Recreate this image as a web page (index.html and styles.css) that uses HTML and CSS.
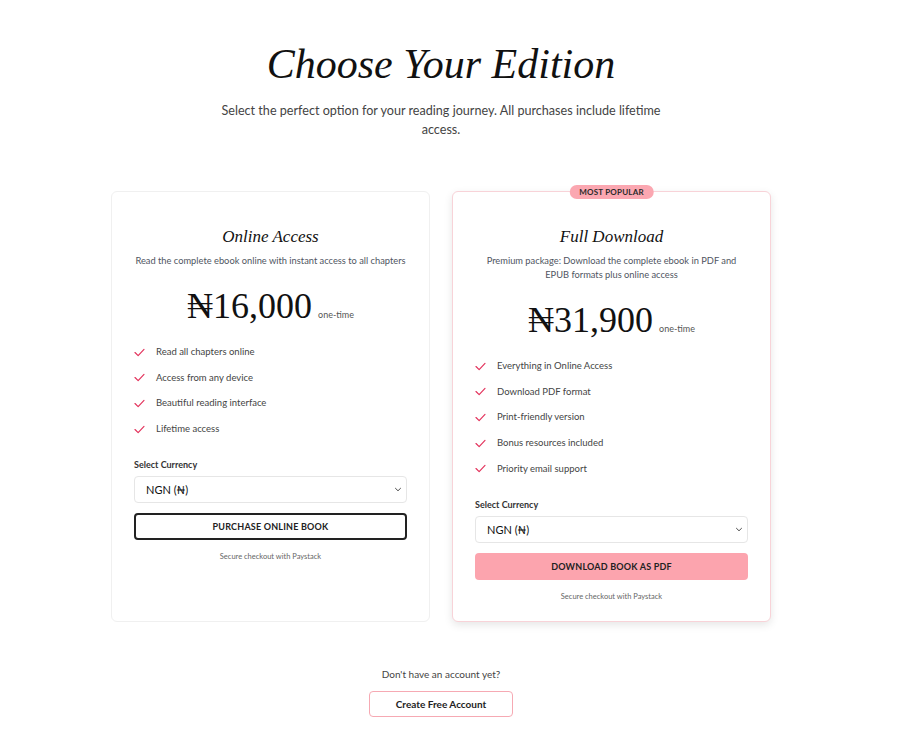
FILE: index.html
```html
<!DOCTYPE html>
<html lang="en">
<head>
<meta charset="utf-8">
<title>Choose Your Edition</title>
<link rel="stylesheet" href="styles.css">
</head>
<body>
<main class="page">
  <header class="intro">
    <h1 class="title">Choose Your Edition</h1>
    <p class="lead">Select the perfect option for your reading journey. All purchases include lifetime access.</p>
  </header>

  <section class="plans">
    <article class="card">
      <h2 class="card-title">Online Access</h2>
      <p class="card-desc">Read the complete ebook online with instant access to all chapters</p>
      <div class="price"><span class="amount">₦16,000</span><span class="period">one-time</span></div>
      <ul class="features">
        <li><svg class="check" viewBox="0 0 12 10"><path d="M1 5l3.5 3.5L11 1.5"/></svg>Read all chapters online</li>
        <li><svg class="check" viewBox="0 0 12 10"><path d="M1 5l3.5 3.5L11 1.5"/></svg>Access from any device</li>
        <li><svg class="check" viewBox="0 0 12 10"><path d="M1 5l3.5 3.5L11 1.5"/></svg>Beautiful reading interface</li>
        <li><svg class="check" viewBox="0 0 12 10"><path d="M1 5l3.5 3.5L11 1.5"/></svg>Lifetime access</li>
      </ul>
      <label class="label">Select Currency</label>
      <div class="select"><span>NGN (₦)</span><svg class="chev" viewBox="0 0 10 6"><path d="M1.5 1.2L5 4.6l3.5-3.4"/></svg></div>
      <button class="btn btn-outline">PURCHASE ONLINE BOOK</button>
      <p class="secure">Secure checkout with Paystack</p>
    </article>

    <article class="card card-featured">
      <span class="badge">MOST POPULAR</span>
      <h2 class="card-title">Full Download</h2>
      <p class="card-desc">Premium package: Download the complete ebook in PDF and EPUB formats plus online access</p>
      <div class="price"><span class="amount">₦31,900</span><span class="period">one-time</span></div>
      <ul class="features">
        <li><svg class="check" viewBox="0 0 12 10"><path d="M1 5l3.5 3.5L11 1.5"/></svg>Everything in Online Access</li>
        <li><svg class="check" viewBox="0 0 12 10"><path d="M1 5l3.5 3.5L11 1.5"/></svg>Download PDF format</li>
        <li><svg class="check" viewBox="0 0 12 10"><path d="M1 5l3.5 3.5L11 1.5"/></svg>Print-friendly version</li>
        <li><svg class="check" viewBox="0 0 12 10"><path d="M1 5l3.5 3.5L11 1.5"/></svg>Bonus resources included</li>
        <li><svg class="check" viewBox="0 0 12 10"><path d="M1 5l3.5 3.5L11 1.5"/></svg>Priority email support</li>
      </ul>
      <label class="label">Select Currency</label>
      <div class="select"><span>NGN (₦)</span><svg class="chev" viewBox="0 0 10 6"><path d="M1.5 1.2L5 4.6l3.5-3.4"/></svg></div>
      <button class="btn btn-pink">DOWNLOAD BOOK AS PDF</button>
      <p class="secure">Secure checkout with Paystack</p>
    </article>
  </section>

  <footer class="signup">
    <p class="signup-text">Don't have an account yet?</p>
    <button class="btn-account">Create Free Account</button>
  </footer>
</main>
</body>
</html>
```

FILE: styles.css
```css
* { box-sizing: border-box; }
html, body { margin: 0; padding: 0; background: #fff; }
body {
  font-family: "Lato", "Inter", sans-serif;
  color: #222;
}
.page {
  width: 882px;
  display: flex;
  flex-direction: column;
  align-items: center;
  padding-top: 38px;
}
.intro { text-align: center; }
.title {
  margin: 0;
  font-family: "Liberation Serif", serif;
  font-style: italic;
  font-weight: 400;
  font-size: 42px;
  line-height: 52px;
  color: #111;
}
.lead {
  margin: 11px auto 0;
  width: 440px;
  font-size: 12.6px;
  line-height: 19px;
  color: #444;
}
.plans {
  margin-top: 52px;
  display: flex;
  gap: 22px;
  align-items: stretch;
}
.card {
  position: relative;
  width: 319px;
  min-height: 430px;
  border: 1px solid #f0f0f0;
  border-radius: 6px;
  padding: 34px 22px 20px;
  display: flex;
  flex-direction: column;
  align-items: stretch;
  background: #fff;
}
.card-featured {
  border-color: #f8d3d8;
  box-shadow: 0 3px 8px rgba(0,0,0,0.10);
}
.badge {
  position: absolute;
  top: -7px;
  left: 50%;
  transform: translateX(-50%);
  background: #fba7b1;
  color: #2a2a2a;
  font-size: 8px;
  font-weight: 700;
  letter-spacing: 0.2px;
  padding: 2px 10px;
  border-radius: 8px;
  line-height: 10px;
}
.card-title {
  margin: 0;
  text-align: center;
  font-family: "Liberation Serif", serif;
  font-style: italic;
  font-weight: 400;
  font-size: 17px;
  line-height: 22px;
  color: #111;
}
.card-desc {
  margin: 6px 0 0;
  text-align: center;
  font-size: 9.3px;
  line-height: 14px;
  color: #4f5561;
}
.price {
  margin-top: 17px;
  display: flex;
  justify-content: center;
  align-items: baseline;
  gap: 6px;
}
.amount {
  font-family: "Liberation Serif", serif;
  font-size: 36px;
  line-height: 42px;
  color: #111;
}
.period {
  font-size: 9px;
  color: #555;
}
.features {
  list-style: none;
  margin: 18px 0 0;
  padding: 0;
  display: flex;
  flex-direction: column;
  gap: 11.7px;
}
.features li {
  display: flex;
  align-items: center;
  gap: 11px;
  font-size: 9.5px;
  line-height: 14px;
  color: #444;
}
.check {
  width: 11px;
  height: 9px;
  flex: none;
  fill: none;
  stroke: #e3335c;
  stroke-width: 1.3;
  stroke-linecap: round;
  stroke-linejoin: round;
}
.label {
  margin-top: 23px;
  font-size: 9px;
  font-weight: 700;
  color: #333;
}
.select {
  margin-top: 6px;
  height: 27px;
  border: 1px solid #e6e6e6;
  border-radius: 4px;
  display: flex;
  align-items: center;
  justify-content: space-between;
  padding: 0 4px 0 11px;
  font-size: 11px;
  color: #111;
}
.chev {
  width: 8px;
  height: 5px;
  fill: none;
  stroke: #444;
  stroke-width: 1.2;
}
.btn {
  margin-top: 10px;
  height: 27px;
  border-radius: 4px;
  font-family: inherit;
  font-size: 9px;
  font-weight: 700;
  letter-spacing: 0.2px;
  color: #222;
  cursor: pointer;
}
.btn-outline {
  background: #fff;
  border: 2px solid #222;
}
.btn-pink {
  background: #fca4ae;
  border: none;
}
.secure {
  margin: 12px 0 0;
  text-align: center;
  font-size: 7.5px;
  color: #666;
}
.signup {
  margin-top: 46px;
  display: flex;
  flex-direction: column;
  align-items: center;
}
.signup-text {
  margin: 0;
  font-size: 10px;
  color: #444;
}
.btn-account {
  margin-top: 11px;
  width: 144px;
  height: 26px;
  background: #fff;
  border: 1.5px solid #f6a9b3;
  border-radius: 4px;
  font-family: inherit;
  font-size: 10px;
  font-weight: 700;
  color: #222;
}
```
